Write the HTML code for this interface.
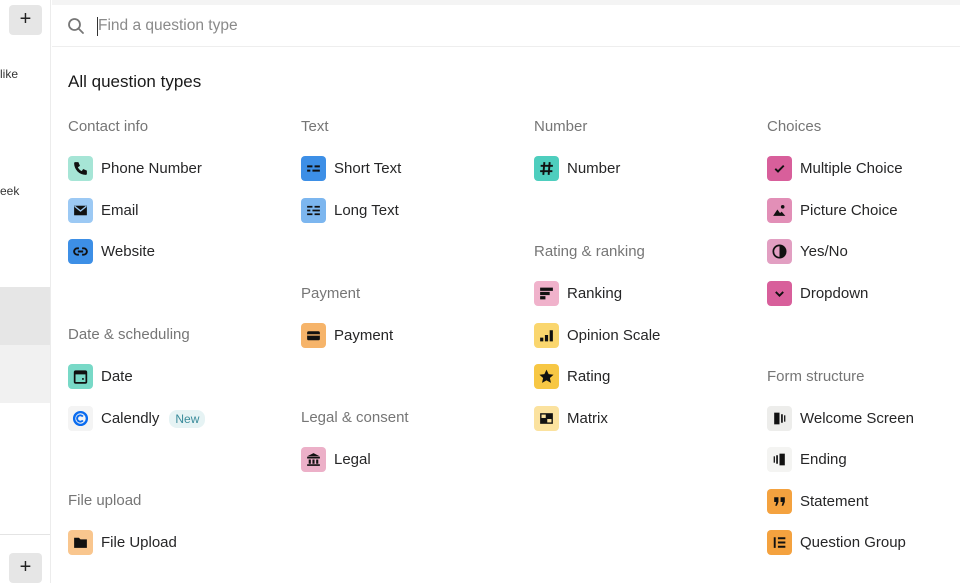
<!DOCTYPE html>
<html><head><meta charset="utf-8"><style>
*{margin:0;padding:0;box-sizing:border-box}
body{width:960px;height:583px;overflow:hidden;background:#fff;font-family:"Liberation Sans",sans-serif;position:relative;color:#262627}
.sb{position:absolute;left:0;top:0;width:51px;height:583px;background:#fff;border-right:1px solid #ececec}
.pl{position:absolute;left:9px;width:33px;height:30px;background:#e6e6e6;border-radius:4px;font-size:20px;text-align:center;line-height:29px;color:#222}
.h{position:absolute;font-size:15px;color:#767676;margin-top:1px}
.it{position:absolute;height:25px;display:flex;align-items:center;font-size:15px;color:#262627;margin-top:1px}
.ic{width:25px;height:25px;border-radius:4px;margin-right:8px;display:flex;align-items:center;justify-content:center}
.ic svg{width:17px;height:17px}
</style></head><body>
<div class="sb">
 <div class="pl" style="top:5px">+</div>
 <div style="position:absolute;left:0;top:67px;font-size:12px;color:#333">like</div>
 <div style="position:absolute;left:0;top:184px;font-size:12px;color:#333">eek</div>
 <div style="position:absolute;left:0;top:287px;width:50px;height:58px;background:#e6e6e6"></div>
 <div style="position:absolute;left:0;top:345px;width:50px;height:58px;background:#f1f1f1"></div>
 <div style="position:absolute;left:0;top:534px;width:50px;height:1px;background:#e4e4e4"></div>
 <div class="pl" style="top:553px">+</div>
</div>
<div style="position:absolute;left:52px;top:0;width:908px;height:5px;background:#f4f4f4"></div>
<div style="position:absolute;left:52px;top:5px;width:908px;height:42px;border-bottom:1px solid #eee">
 <svg style="position:absolute;left:15px;top:12px" width="18" height="18" viewBox="0 0 18 18"><circle cx="7.5" cy="7.5" r="5.5" fill="none" stroke="#777" stroke-width="1.8"/><path d="M11.5 11.5L16 16" stroke="#777" stroke-width="1.8" stroke-linecap="round"/></svg>
 <div style="position:absolute;left:45px;top:12px;width:1px;height:19px;background:#333"></div>
 <div style="position:absolute;left:46px;top:12px;font-size:15.5px;color:#8a8a8a">Find a question type</div>
</div>
<div style="position:absolute;left:68px;top:72px;font-size:17px;color:#1a1a1a">All question types</div>

<div class="h" style="left:68px;top:117px">Contact info</div>
<div class="h" style="left:301px;top:117px">Text</div>
<div class="h" style="left:534px;top:117px">Number</div>
<div class="h" style="left:767px;top:117px">Choices</div>
<div class="h" style="left:534px;top:242px">Rating &amp; ranking</div>
<div class="h" style="left:301px;top:284px">Payment</div>
<div class="h" style="left:68px;top:325px">Date &amp; scheduling</div>
<div class="h" style="left:767px;top:367px">Form structure</div>
<div class="h" style="left:301px;top:408px">Legal &amp; consent</div>
<div class="h" style="left:68px;top:491px">File upload</div>

<!-- col1 -->
<div class="it" style="left:68px;top:155px"><div class="ic" style="background:#a6e5d6"><svg viewBox="0 0 16 16"><path d="M3 2h3l1.5 3.5-2 1.3a8 8 0 0 0 3.7 3.7l1.3-2L14 10v3a1 1 0 0 1-1 1A11 11 0 0 1 2 3a1 1 0 0 1 1-1z" fill="#111"/></svg></div>Phone Number</div>
<div class="it" style="left:68px;top:197px"><div class="ic" style="background:#9cc9f4"><svg viewBox="0 0 16 16"><path d="M2 3.5h12v9H2z" fill="#111"/><path d="M2.5 4l5.5 4.5L13.5 4" stroke="#9cc9f4" stroke-width="1.3" fill="none"/></svg></div>Email</div>
<div class="it" style="left:68px;top:238px"><div class="ic" style="background:#3d8fe6"><svg viewBox="0 0 16 16"><path d="M6.5 5H5a3 3 0 0 0 0 6h1.5M9.5 5H11a3 3 0 0 1 0 6H9.5M5.5 8h5" stroke="#111" stroke-width="1.8" fill="none"/></svg></div>Website</div>
<div class="it" style="left:68px;top:363px"><div class="ic" style="background:#78d9c7"><svg viewBox="0 0 16 16"><rect x="2.5" y="3" width="11" height="11" rx="1" fill="none" stroke="#111" stroke-width="1.6"/><path d="M2.5 3h11v3h-11z" fill="#111"/><rect x="9.5" y="9.5" width="1.6" height="1.6" fill="#111"/></svg></div>Date</div>
<div class="it" style="left:68px;top:405px"><div class="ic" style="background:#f4f4f4"><svg viewBox="0 0 16 16"><circle cx="8" cy="8" r="6" fill="none" stroke="#0a6cf0" stroke-width="2.2"/><path d="M10.2 6.2a3 3 0 1 0 0 3.6" fill="none" stroke="#0a6cf0" stroke-width="1.8"/></svg></div>Calendly<span style="margin-left:10px;background:#e6f3f4;color:#3a8b9a;font-size:12px;padding:2px 6px;border-radius:8px">New</span></div>
<div class="it" style="left:68px;top:529px"><div class="ic" style="background:#f9c68e"><svg viewBox="0 0 16 16"><path d="M2 3.5h4.5l1.5 1.5h6v8H2z" fill="#111"/></svg></div>File Upload</div>

<!-- col2 -->
<div class="it" style="left:301px;top:155px"><div class="ic" style="background:#3d8fe6"><svg viewBox="0 0 16 16"><path d="M2 6h5M9 6h5M2 10h3M7 10h7" stroke="#111" stroke-width="1.8"/></svg></div>Short Text</div>
<div class="it" style="left:301px;top:197px"><div class="ic" style="background:#7cb6ef"><svg viewBox="0 0 16 16"><path d="M2 4.5h5M9 4.5h5M2 8h3M7 8h7M2 11.5h5M9 11.5h5" stroke="#111" stroke-width="1.6"/></svg></div>Long Text</div>
<div class="it" style="left:301px;top:322px"><div class="ic" style="background:#f6b46a"><svg viewBox="0 0 16 16"><rect x="2" y="4" width="12" height="8.5" rx="1.5" fill="#111"/><path d="M2 7.5h12" stroke="#f6b46a" stroke-width="1.3"/></svg></div>Payment</div>
<div class="it" style="left:301px;top:446px"><div class="ic" style="background:#ecb0c8"><svg viewBox="0 0 16 16"><path d="M8 2l6 3H2z M2 5.5h12v1.5H2z M3.5 8h2v4h-2z M7 8h2v4H7z M10.5 8h2v4h-2z M2 12.5h12V14H2z" fill="#111"/></svg></div>Legal</div>

<!-- col3 -->
<div class="it" style="left:534px;top:155px"><div class="ic" style="background:#4ecebe"><svg viewBox="0 0 16 16"><path d="M6 2L5 14M11 2l-1 12M2.5 5.5h11.5M2 10.5h11.5" stroke="#111" stroke-width="1.8"/></svg></div>Number</div>
<div class="it" style="left:534px;top:280px"><div class="ic" style="background:#f0b2cb"><svg viewBox="0 0 16 16"><path d="M2 2.5h12v3H2zM2 6.5h9v3H2zM2 10.5h5v3H2z" fill="#111"/></svg></div>Ranking</div>
<div class="it" style="left:534px;top:322px"><div class="ic" style="background:#fad66e"><svg viewBox="0 0 16 16"><path d="M2 10h3v3.5H2zM6.5 7.5h3v6h-3zM11 3h3v10.5h-3z" fill="#111"/></svg></div>Opinion Scale</div>
<div class="it" style="left:534px;top:363px"><div class="ic" style="background:#f7c744"><svg viewBox="0 0 16 16"><path d="M8 1.5l2 4.3 4.6.5-3.4 3.1 1 4.6L8 11.6 3.8 14l1-4.6L1.4 6.3 6 5.8z" fill="#111"/></svg></div>Rating</div>
<div class="it" style="left:534px;top:405px"><div class="ic" style="background:#fbe29f"><svg viewBox="0 0 16 16"><rect x="2" y="3" width="12" height="10" fill="#111"/><rect x="3.3" y="4.3" width="4" height="3.2" fill="#fbe29f"/><rect x="8.7" y="8.5" width="4" height="3.2" fill="#fbe29f"/></svg></div>Matrix</div>

<!-- col4 -->
<div class="it" style="left:767px;top:155px"><div class="ic" style="background:#d85f9b"><svg viewBox="0 0 16 16"><path d="M4 8.3l2.6 2.5L12 5.3" stroke="#111" stroke-width="1.8" fill="none"/></svg></div>Multiple Choice</div>
<div class="it" style="left:767px;top:197px"><div class="ic" style="background:#e28fb7"><svg viewBox="0 0 16 16"><circle cx="11" cy="4.5" r="1.7" fill="#111"/><path d="M2 13l4-6 2.5 3.5 1.5-1.5 3.5 4z" fill="#111"/></svg></div>Picture Choice</div>
<div class="it" style="left:767px;top:238px"><div class="ic" style="background:#e29fc2"><svg viewBox="0 0 16 16"><circle cx="8" cy="8" r="5.8" fill="none" stroke="#111" stroke-width="1.6"/><path d="M8 2.2a5.8 5.8 0 0 1 0 11.6z" fill="#111"/></svg></div>Yes/No</div>
<div class="it" style="left:767px;top:280px"><div class="ic" style="background:#d85f9b"><svg viewBox="0 0 16 16"><path d="M4.5 6.5L8 10l3.5-3.5" stroke="#111" stroke-width="1.8" fill="none"/></svg></div>Dropdown</div>
<div class="it" style="left:767px;top:405px"><div class="ic" style="background:#ededeb"><svg viewBox="0 0 16 16"><rect x="3" y="2.5" width="5" height="11" fill="#111"/><rect x="9.5" y="4" width="1.6" height="8" fill="#111"/><rect x="12.3" y="5" width="1.2" height="6" fill="#111"/></svg></div>Welcome Screen</div>
<div class="it" style="left:767px;top:446px"><div class="ic" style="background:#f4f4f2"><svg viewBox="0 0 16 16"><rect x="8" y="2.5" width="5" height="11" fill="#111"/><rect x="4.9" y="4" width="1.6" height="8" fill="#111"/><rect x="2.5" y="5" width="1.2" height="6" fill="#111"/></svg></div>Ending</div>
<div class="it" style="left:767px;top:488px"><div class="ic" style="background:#f4a23f"><svg viewBox="0 0 16 16"><path d="M3 4h4v4.5L5.5 12H4l1-3.5H3zM9 4h4v4.5L11.5 12H10l1-3.5H9z" fill="#111"/></svg></div>Statement</div>
<div class="it" style="left:767px;top:529px"><div class="ic" style="background:#f4a23f"><svg viewBox="0 0 16 16"><path d="M3.5 3v10M6.5 4h7M6.5 8h7M6.5 12h7" stroke="#111" stroke-width="1.8"/></svg></div>Question Group</div>
</body></html>
